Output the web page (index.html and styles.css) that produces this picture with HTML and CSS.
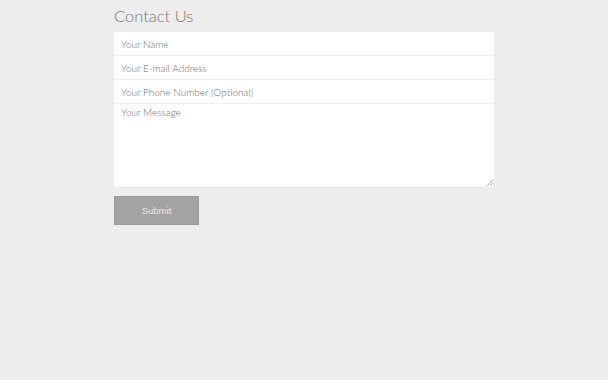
FILE: index.html
```html
<!DOCTYPE html>
<html lang="en">
<head>
  <meta charset="UTF-8">
  <title>Contact Us</title>
  <link rel="stylesheet" href="styles.css">
</head>
<body>
  <main class="contact">
    <h1 class="contact-title">Contact Us</h1>
    <form class="contact-form">
      <input class="field" type="text" placeholder="Your Name">
      <input class="field" type="email" placeholder="Your E-mail Address">
      <input class="field" type="tel" placeholder="Your Phone Number (Optional)">
      <div class="message-wrap">
        <textarea class="field field-message" placeholder="Your Message"></textarea>
        <svg class="grip" width="6" height="6" viewBox="0 0 6 6">
          <path d="M6 0 L0 6 M6 3 L3 6" stroke="#b5b5b5" stroke-width="1"/>
        </svg>
      </div>
      <button class="submit" type="button">Submit</button>
    </form>
  </main>
</body>
</html>
```

FILE: styles.css
```css
* { margin: 0; padding: 0; box-sizing: border-box; }
html, body {
  height: 100%;
  background: #ededed;
  font-family: 'Lato', 'Open Sans', sans-serif;
}
.contact {
  width: 380px;
  margin-left: 114px;
  padding-top: 5px;
}
.contact-title {
  font-size: 16.5px;
  font-weight: 300;
  color: #777;
  line-height: 22px;
  margin-bottom: 5px;
}
.contact-form {
  display: flex;
  flex-direction: column;
}
.field {
  display: block;
  width: 100%;
  height: 24px;
  border: none;
  border-bottom: 1px solid #f0f0f0;
  background: #fff;
  padding: 0 7px;
  font-family: inherit;
  font-size: 10px;
  font-weight: 300;
  color: #555;
  outline: none;
}
.field::placeholder { color: #6e6e6e; }
.message-wrap {
  position: relative;
}
.field-message {
  height: 83px;
  border-bottom: none;
  padding-top: 2px;
  resize: none;
}
.grip {
  position: absolute;
  right: 1px;
  bottom: 1px;
}
.submit {
  margin-top: 9px;
  width: 85px;
  height: 29px;
  background: #a3a3a3;
  border: 1px solid #9a9a9a;
  color: #e8e8e8;
  font-family: 'Liberation Sans', Arial, sans-serif;
  font-size: 9.5px;
  cursor: pointer;
}
```
